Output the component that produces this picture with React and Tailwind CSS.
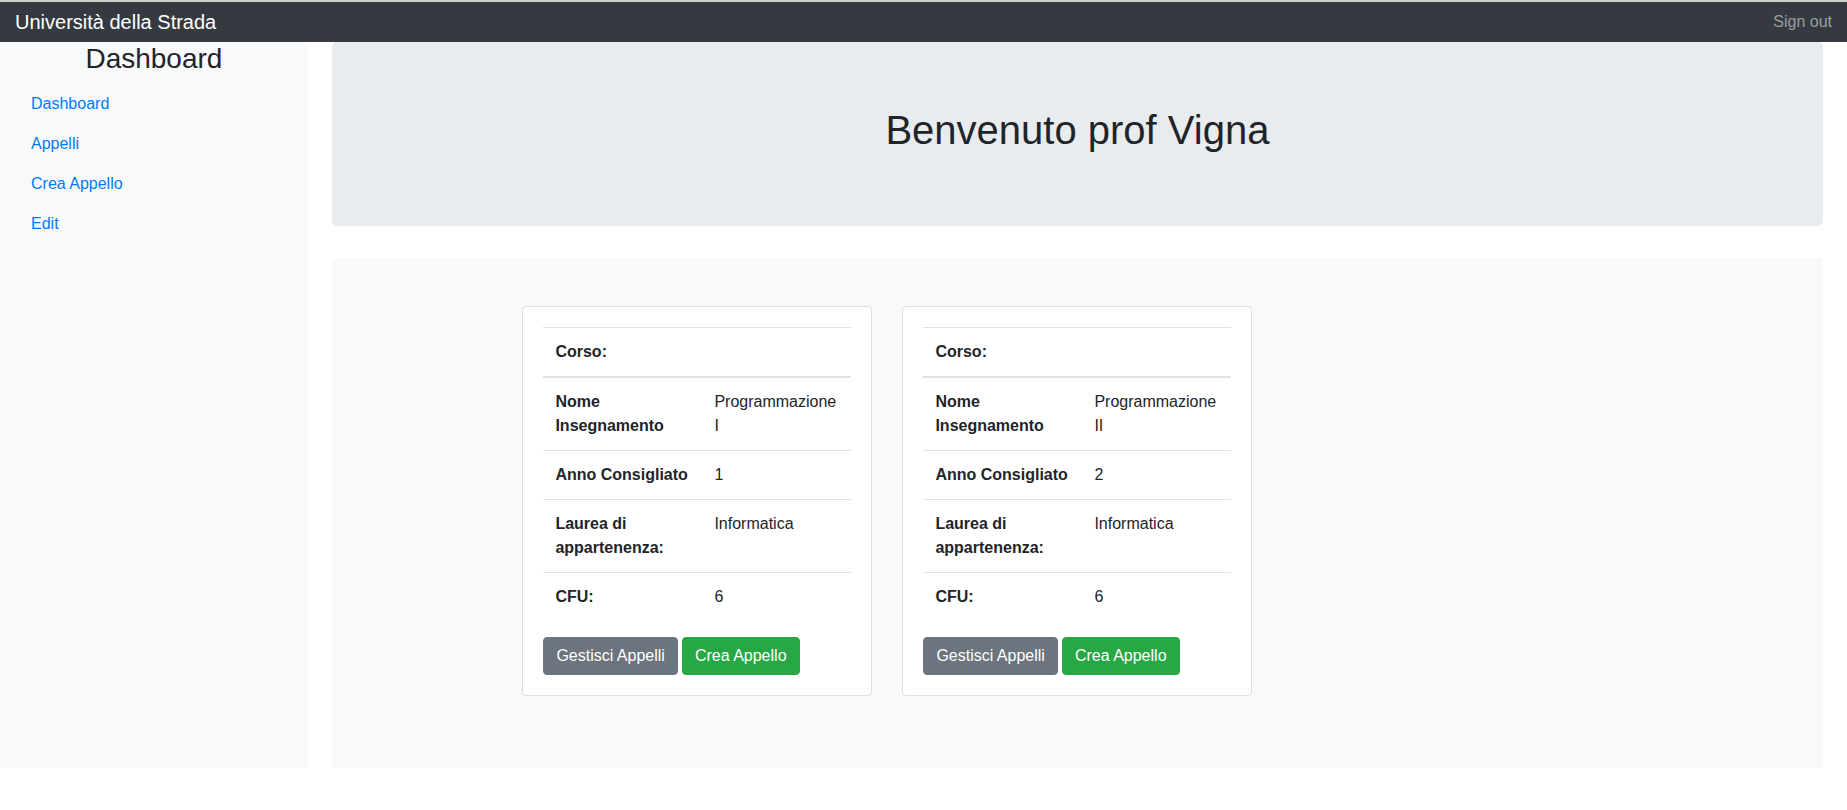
// App.jsx

const corsi = [
  { nome: "Programmazione I", anno: 1, laurea: "Informatica", cfu: 6 },
  { nome: "Programmazione II", anno: 2, laurea: "Informatica", cfu: 6 },
];

const CorsoCard = ({ corso }) => {
  return (
    <div className="mb-6 rounded-[4px] border border-[#dfdfdf] bg-white p-5">
      <table className="mb-4 w-full table-fixed border-collapse text-base leading-6">
        <colgroup>
          <col className="w-[159px]" />
          <col />
        </colgroup>
        <thead>
          <tr>
            <th className="border-t border-b-2 border-[#dee2e6] p-3 text-left align-bottom font-bold">Corso:</th>
            <th className="border-t border-b-2 border-[#dee2e6] p-3"></th>
          </tr>
        </thead>
        <tbody>
          <tr>
            <th className="border-t border-[#dee2e6] p-3 text-left align-top font-bold">Nome Insegnamento</th>
            <td className="border-t border-[#dee2e6] p-3 align-top">{corso.nome}</td>
          </tr>
          <tr>
            <th className="border-t border-[#dee2e6] p-3 text-left align-top font-bold">Anno Consigliato</th>
            <td className="border-t border-[#dee2e6] p-3 align-top">{corso.anno}</td>
          </tr>
          <tr>
            <th className="border-t border-[#dee2e6] p-3 text-left align-top font-bold">Laurea di appartenenza:</th>
            <td className="border-t border-[#dee2e6] p-3 align-top">{corso.laurea}</td>
          </tr>
          <tr>
            <th className="border-t border-[#dee2e6] p-3 text-left align-top font-bold">CFU:</th>
            <td className="border-t border-[#dee2e6] p-3 align-top">{corso.cfu}</td>
          </tr>
        </tbody>
      </table>
      <div className="flex gap-1">
        <button className="rounded-[4px] border border-[#6c757d] bg-[#6c757d] px-3 py-1.5 text-base leading-6 text-white">
          Gestisci Appelli
        </button>
        <button className="rounded-[4px] border border-[#28a745] bg-[#28a745] px-3 py-1.5 text-base leading-6 text-white">
          Crea Appello
        </button>
      </div>
    </div>
  );
};

const App = () => {
  return (
    <div className="min-h-screen bg-white font-['Liberation_Sans',Arial,sans-serif] text-[#212529]">
      <nav className="flex h-[42px] items-center justify-between border-t-2 border-[#d0d0d0] bg-[#343a40] px-[15px]">
        <a href="#" className="text-[20px] leading-[30px] text-white">Università della Strada</a>
        <a href="#" className="text-base leading-6 text-white/50">Sign out</a>
      </nav>

      <div className="flex">
        <aside className="w-1/6 shrink-0 bg-[#f8f9fa] px-[15px]">
          <h3 className="mb-2 text-center text-[28px] leading-[33.6px]">Dashboard</h3>
          <ul>
            <li><a href="#" className="block px-4 py-2 text-base leading-6 text-[#007bff]">Dashboard</a></li>
            <li><a href="#" className="block px-4 py-2 text-base leading-6 text-[#007bff]">Appelli</a></li>
            <li><a href="#" className="block px-4 py-2 text-base leading-6 text-[#007bff]">Crea Appello</a></li>
            <li><a href="#" className="block px-4 py-2 text-base leading-6 text-[#007bff]">Edit</a></li>
          </ul>
        </aside>

        <main className="flex-1 px-6">
          <div className="mb-8 rounded-[5px] bg-[#e9ecef] px-8 py-16 text-center">
            <h1 className="mb-2 text-[40px] leading-[48px]">Benvenuto prof Vigna</h1>
          </div>

          <div className="bg-[#f8f9fa] py-12">
            <div className="mx-auto max-w-[1140px] px-[15px]">
              <div className="-mx-[15px] flex">
                {corsi.map((c) => (
                  <div key={c.nome} className="w-1/3 px-[15px]">
                    <CorsoCard corso={c} />
                  </div>
                ))}
              </div>
            </div>
          </div>
        </main>
      </div>
    </div>
  );
};

export default App;
